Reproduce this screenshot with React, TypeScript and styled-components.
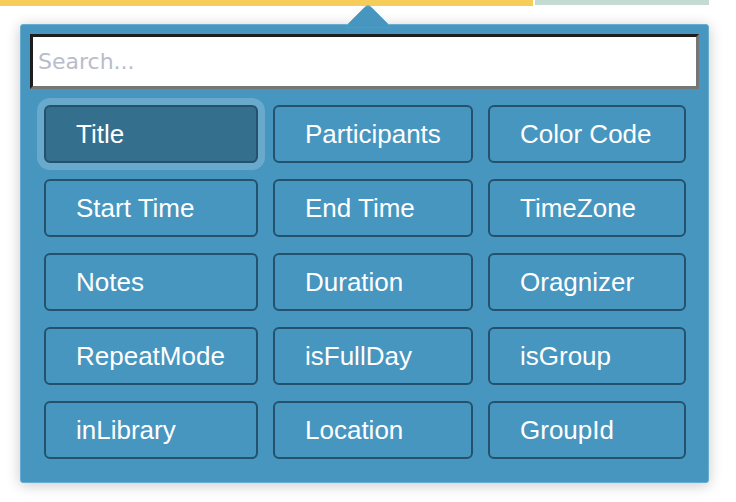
import React from "react";
import styled, { createGlobalStyle } from "styled-components";

const Global = createGlobalStyle`
  html, body { margin: 0; padding: 0; background: #ffffff; }
  body { font-family: "Liberation Sans", Arial, sans-serif; }
`;

const Page = styled.div`
  width: 736px;
  height: 502px;
  overflow: hidden;
  background: #ffffff;
`;

const TopStrip = styled.div`
  display: flex;
  align-items: flex-start;
  gap: 2px;
  height: 6px;
`;

const Bar = styled.div<{ $w: number; $h: number; $c: string }>`
  width: ${(p) => p.$w}px;
  height: ${(p) => p.$h}px;
  background: ${(p) => p.$c};
`;

const Popover = styled.div`
  position: relative;
  margin: 18px 0 0 20px;
  width: 689px;
  box-sizing: border-box;
  background: #4796bf;
  border: 1px solid #68acd0;
  border-radius: 3px;
  padding: 9px 9px 23px 9px;
  box-shadow: 0 2px 14px rgba(0, 0, 0, 0.22);
`;

const Arrow = styled.svg`
  position: absolute;
  left: 324px;
  top: -21px;
  width: 46px;
  height: 23px;
  overflow: visible;
`;

const SearchInput = styled.input`
  display: block;
  width: 100%;
  height: 55px;
  box-sizing: border-box;
  margin: 0;
  padding: 0 0 0 5px;
  background: #ffffff;
  border-style: solid;
  border-width: 3px;
  border-color: #1e1e1e #767676 #767676 #1e1e1e;
  font-family: "DejaVu Sans", "Open Sans", sans-serif;
  font-size: 22px;
  color: #333;
  outline: none;
  &::placeholder {
    color: #b9bcc9;
  }
`;

const Grid = styled.div`
  display: grid;
  grid-template-columns: 214px 200px 198px;
  grid-auto-rows: 58px;
  column-gap: 15px;
  row-gap: 16px;
  margin: 16px 0 0 14px;
`;

const FieldButton = styled.button<{ $active?: boolean }>`
  box-sizing: border-box;
  height: 58px;
  margin: 0;
  padding: 0 0 1px 30px;
  text-align: left;
  border: 2px solid #24526c;
  border-radius: 6px;
  background: ${(p) => (p.$active ? "#356f8e" : "transparent")};
  box-shadow: ${(p) => (p.$active ? "0 0 0 7px #69aacc" : "none")};
  color: #ffffff;
  font-family: "Liberation Sans", Arial, sans-serif;
  font-size: 26px;
  line-height: 1;
  cursor: pointer;
`;

const fields = [
  "Title", "Participants", "Color Code",
  "Start Time", "End Time", "TimeZone",
  "Notes", "Duration", "Oragnizer",
  "RepeatMode", "isFullDay", "isGroup",
  "inLibrary", "Location", "GroupId",
];

export default function App() {
  return (
    <Page>
      <Global />
      <TopStrip>
        <Bar $w={533} $h={6} $c="#f6cd58" />
        <Bar $w={174} $h={5} $c="#c3dbd3" />
      </TopStrip>
      <Popover>
        <Arrow viewBox="0 0 46 23">
          <path
            d="M0 23 L19.5 3.5 Q23 0 26.5 3.5 L46 23 Z"
            fill="#4796bf"
            stroke="#68acd0"
            strokeWidth="1"
          />
          <rect x="0" y="21.5" width="46" height="2" fill="#4796bf" />
        </Arrow>
        <SearchInput placeholder="Search..." />
        <Grid>
          {fields.map((f, i) => (
            <FieldButton key={f} $active={i === 0}>
              {f}
            </FieldButton>
          ))}
        </Grid>
      </Popover>
    </Page>
  );
}
